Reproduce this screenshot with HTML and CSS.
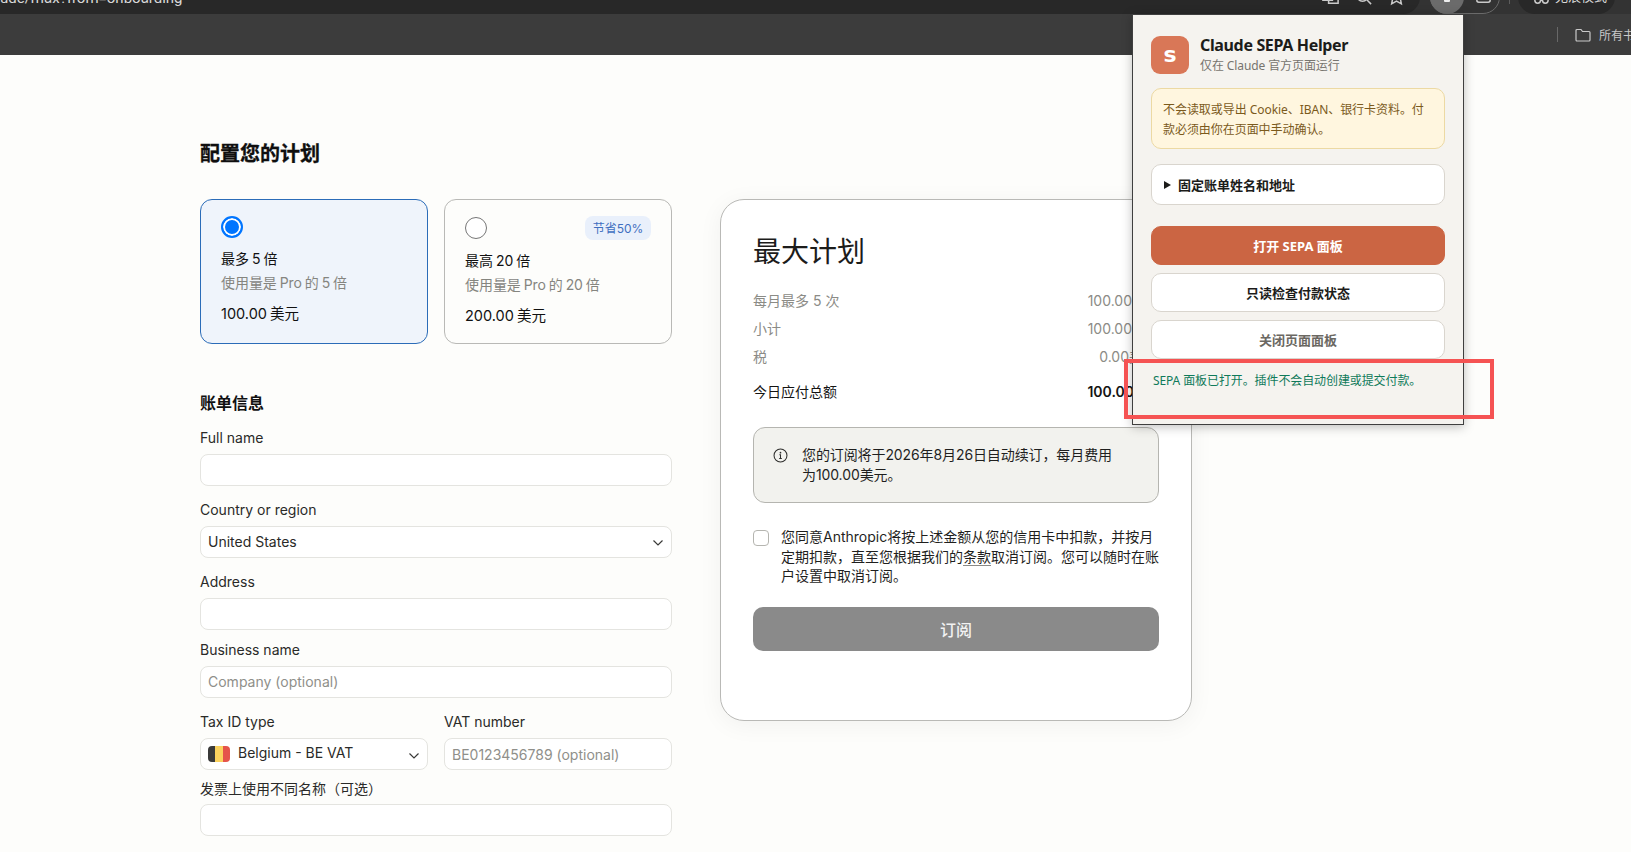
FILE: index.html
```html
<!DOCTYPE html>
<html lang="zh-CN">
<head>
<meta charset="utf-8">
<title>配置您的计划</title>
<link rel="stylesheet" href="styles.css">
</head>
<body>
<header class="chrome">
  <div class="toolbar">
    <div class="omnibox">
      <span class="url">ude/max?from=onboarding</span>
      <div class="omni-icons">
        <svg class="tb-icon" viewBox="0 0 20 20"><path d="M2 4h10v10H2zM8 7h10v10H8z"/></svg>
        <svg class="tb-icon" viewBox="0 0 20 20"><circle cx="9" cy="9" r="6"/><path d="M13.5 13.5L18 18"/></svg>
        <svg class="tb-icon" viewBox="0 0 20 20"><path d="M10 2l2.5 5.3 5.7.7-4.2 4 1.1 5.700-5.100-2.800-5.100 2.800 1.100-5.700-4.200-4 5.700-.7z"/></svg>
      </div>
    </div>
    <div class="ext-group">
      <span class="ext-active"><span class="ext-dot"></span></span>
      <svg class="tb-icon" viewBox="0 0 20 20"><rect x="3" y="3" width="14" height="14" rx="2"/></svg>
    </div>
    <span class="tb-sep"></span>
    <div class="incognito">
      <svg class="tb-icon" viewBox="0 0 20 20"><circle cx="6" cy="14" r="3"/><circle cx="14" cy="14" r="3"/><path d="M9 14h2"/></svg>
      <span class="incognito-text">无痕模式</span>
    </div>
  </div>
  <div class="bookmarks">
    <span class="bm-sep"></span>
    <svg class="folder" viewBox="0 0 16 14"><path d="M1 2.500A1 1 0 0 1 2 1.500h4l1.500 2H14a1 1 0 0 1 1 1V12a1 1 0 0 1-1 1H2a1 1 0 0 1-1-1z"/></svg>
    <span class="bm-text">所有书签</span>
  </div>
</header>

<main class="page">
  <h1 class="page-title">配置您的计划</h1>
  <div class="columns">
    <section class="left">
      <div class="plans">
        <div class="plan plan-on">
          <div class="plan-top"><span class="radio radio-on"></span></div>
          <div class="plan-name">最多 5 倍</div>
          <div class="plan-sub">使用量是 Pro 的 5 倍</div>
          <div class="plan-price">100.00 美元</div>
        </div>
        <div class="plan plan-off">
          <div class="plan-top"><span class="radio"></span><span class="badge">节省50%</span></div>
          <div class="plan-name">最高 20 倍</div>
          <div class="plan-sub">使用量是 Pro 的 20 倍</div>
          <div class="plan-price">200.00 美元</div>
        </div>
      </div>

      <h2 class="billing-title">账单信息</h2>
      <div class="field field-first">
        <label class="label">Full name</label>
        <div class="input"></div>
      </div>
      <div class="field">
        <label class="label">Country or region</label>
        <div class="input select"><span class="select-value">United States</span>
          <svg class="chev" viewBox="0 0 12 8"><path d="M1.500 1.500L6 6l4.500-4.500"/></svg>
        </div>
      </div>
      <div class="field">
        <label class="label">Address</label>
        <div class="input"></div>
      </div>
      <div class="field field-business">
        <label class="label">Business name</label>
        <div class="input placeholder">Company (optional)</div>
      </div>
      <div class="field-row">
        <div class="field-cell">
          <label class="label">Tax ID type</label>
          <div class="input select">
            <span class="flag"><i class="flag-k"></i><i class="flag-y"></i><i class="flag-r"></i></span>
            <span class="select-text">Belgium - BE VAT</span>
            <svg class="chev" viewBox="0 0 12 8"><path d="M1.500 1.500L6 6l4.500-4.500"/></svg>
          </div>
        </div>
        <div class="field-cell">
          <label class="label">VAT number</label>
          <div class="input placeholder">BE0123456789 (optional)</div>
        </div>
      </div>
      <div class="field field-last">
        <label class="label">发票上使用不同名称（可选）</label>
        <div class="input"></div>
      </div>
    </section>

    <section class="summary">
      <h2 class="summary-title">最大计划</h2>
      <div class="rows">
        <div class="row"><span>每月最多 5 次</span><span>100.00美元</span></div>
        <div class="row"><span>小计</span><span>100.00美元</span></div>
        <div class="row row-tax"><span>税</span><span>0.00美元</span></div>
        <div class="row row-total"><span>今日应付总额</span><span class="total-num">100.00美元</span></div>
      </div>
      <div class="notice">
        <svg class="info" viewBox="0 0 16 16"><circle cx="8" cy="8" r="6.900"/><path d="M6.800 7.300H8v4M6.600 11.300h2.800"/><circle class="info-dot" cx="8" cy="5" r="0.900"/></svg>
        <p>您的订阅将于2026年8月26日自动续订，每月费用为100.00美元。</p>
      </div>
      <div class="agree">
        <span class="check"></span>
        <p>您同意Anthropic将按上述金额从您的信用卡中扣款，并按月定期扣款，直至您根据我们的<a class="terms">条款</a>取消订阅。您可以随时在账户设置中取消订阅。</p>
      </div>
      <button class="subscribe">订阅</button>
    </section>
  </div>
</main>

<aside class="popup">
  <div class="pop-head">
    <div class="pop-logo">S</div>
    <div>
      <div class="pop-title">Claude SEPA Helper</div>
      <div class="pop-sub">仅在 Claude 官方页面运行</div>
    </div>
  </div>
  <div class="pop-warn">不会读取或导出 Cookie、IBAN、银行卡资料。付款必须由你在页面中手动确认。</div>
  <div class="pop-details"><span class="tri"></span>固定账单姓名和地址</div>
  <button class="pop-btn pop-primary">打开 SEPA 面板</button>
  <button class="pop-btn">只读检查付款状态</button>
  <button class="pop-btn pop-muted">关闭页面面板</button>
  <div class="pop-status">SEPA 面板已打开。插件不会自动创建或提交付款。</div>
</aside>
<div class="highlight"></div>
</body>
</html>
```
FILE: styles.css
```css
* { box-sizing: border-box; }
html, body { margin: 0; height: 100%; overflow: hidden; }
body {
  background: #fdfdfb;
  color: #141413;
  font-family: Inter, "Noto Sans CJK SC", sans-serif;
  font-size: 14px;
}
.chrome { height: 55px; background: #3c3c3c; color: #d0d0d0; }
.toolbar {
  height: 14px;
  overflow: hidden;
  background: #333;
  display: flex;
  align-items: flex-end;
}
.omnibox {
  width: 1420px;
  height: 34px;
  flex: none;
  background: #282828;
  border-radius: 0 17px 17px 0;
  display: flex;
  align-items: flex-end;
  justify-content: space-between;
  padding-right: 14px;
}
.url {
  font: 15px/20px Roboto, sans-serif;
  color: #d8d8d8;
  margin-bottom: 6px;
  white-space: nowrap;
}
.omni-icons { display: flex; gap: 14px; margin-bottom: 8px; }
.tb-icon { width: 19px; height: 19px; fill: none; stroke: #c9c9c9; stroke-width: 1.600; flex: none; }
.ext-group {
  margin-left: 10px;
  width: 70px;
  height: 34px;
  flex: none;
  border: 1px solid #6a6a6a;
  border-radius: 17px;
  display: flex;
  align-items: flex-end;
  gap: 10px;
}
.ext-active {
  width: 34px;
  height: 34px;
  margin: -1px 0 -1px -1px;
  border-radius: 50%;
  background: #6b6b6b;
  display: flex;
  justify-content: center;
  align-items: flex-end;
  padding-bottom: 12px;
  flex: none;
}
.ext-dot { width: 6px; height: 4px; background: #eee; border-radius: 1px; }
.ext-group .tb-icon { margin-bottom: 8px; }
.tb-sep { width: 1px; height: 20px; background: #5c5c5c; margin: 0 8px 10px 9px; flex: none; }
.incognito {
  width: 97px;
  height: 34px;
  flex: none;
  background: #282828;
  border-radius: 17px;
  display: flex;
  align-items: flex-end;
  gap: 4px;
  padding: 0 0 8px 14px;
}
.incognito-text { font-size: 13px; line-height: 20px; color: #d8d8d8; }
.bookmarks {
  height: 41px;
  display: flex;
  align-items: center;
  justify-content: flex-end;
  overflow: hidden;
}
.bm-sep { width: 1px; height: 15px; background: #686868; margin-right: 17px; flex: none; }
.folder { width: 16px; height: 14px; fill: none; stroke: #c9c9c9; stroke-width: 1.200; flex: none; margin-right: 8px; }
.bm-text { width: 32px; flex: none; white-space: nowrap; font-size: 12px; color: #c8c8c8; }

.page { padding: 87px 0 0 200px; }
.page-title {
  margin: 0 0 33px;
  font-size: 20px;
  line-height: 24px;
  font-weight: 700;
  color: #0f0f0f;
  -webkit-text-stroke: 0.3px #0f0f0f;
}
.columns { display: flex; gap: 48px; align-items: flex-start; }
.left { width: 472px; flex: none; }
.plans { display: flex; gap: 16px; }
.plan {
  flex: 1;
  height: 144.500px;
  border-radius: 12px;
  padding: 17px 20px 0;
}
.plan-on { background: #eff4fb; border: 1px solid #2b6cb8; padding-top: 16px; }
.plan-off { background: #fdfdfb; border: 1px solid #b9b9b6; }
.plan-top { display: flex; justify-content: space-between; height: 22px; align-items: center; }
.radio {
  width: 22px;
  height: 22px;
  border-radius: 50%;
  border: 1px solid #767676;
  background: #fff;
  flex: none;
}
.radio-on { border: 2px solid #0075ff; box-shadow: inset 0 0 0 2px #fff; background: #0075ff; }
.badge {
  height: 24px;
  width: 66px;
  border-radius: 8px;
  background: #e9f0fb;
  color: #3f6fc0;
  font-size: 12px;
  line-height: 26px;
  text-align: center;
}
.plan-name { margin-top: 10px; font-size: 14px; line-height: 22px; color: #111; word-spacing: -1px; }
.plan-sub { margin-top: 2px; font-size: 14px; line-height: 22px; color: #85857f; word-spacing: -1px; letter-spacing: -0.05px; }
.plan-price { margin-top: 9px; font-size: 14.500px; line-height: 22px; color: #111; word-spacing: -1px; }
.plan-off .plan-name { margin-top: 11px; }

.billing-title { margin: 48px 0 0; font-size: 16px; line-height: 22px; font-weight: 700; color: #111; }
.label { display: block; font-size: 14px; line-height: 20px; color: #2a2a28; margin-bottom: 6px; }
.input {
  display: flex;
  align-items: center;
  height: 32px;
  padding: 0 7px;
  background: #fff;
  border: 1px solid #e4e4e0;
  border-radius: 8px;
  font-size: 14px;
  color: #2a2a28;
}
.placeholder { color: #8f8f8a; }
.select { justify-content: space-between; }
.select-value { margin-top: -1px; }
.select-text { flex: 1; margin: -3px 0 0 8px; }
.chev { width: 12px; height: 8px; fill: none; stroke: #3a3a38; stroke-width: 1.200; margin: 3px 0 0; flex: none; }
.field { margin-top: 14px; }
.field-first { margin-top: 14px; }
.field-business { margin-top: 10px; }
.field-last { margin-top: 9px; }
.field-last .label { margin-bottom: 5px; }
.field-row { display: flex; gap: 16px; margin-top: 14.500px; }
.field-cell { flex: 1; }
.flag {
  display: flex;
  width: 22px;
  height: 16px;
  border-radius: 4px;
  overflow: hidden;
  flex: none;
}
.flag i { flex: 1; }
.flag-k { background: #3a3a3a; }
.flag-y { background: #fbd25e; }
.flag-r { background: #e5544b; }

.summary {
  width: 472px;
  height: 522px;
  flex: none;
  background: #fff;
  border: 1px solid #b9b9b6;
  border-radius: 24px;
  box-shadow: 0 4px 24px rgba(0, 0, 0, 0.05);
  padding: 30px 32px 0;
}
.summary-title { margin: 0; font-size: 28px; line-height: 44px; font-weight: 400; color: #1c1c1b; }
.rows { margin-top: 12px; }
.row { display: flex; justify-content: space-between; height: 28px; align-items: center; color: #8b8b86; font-size: 14px; margin-right: -1px; }
.row-tax { margin-right: 2px; }
.row-total { margin-top: 7px; color: #141413; margin-right: -3px; }
.total-num { font-weight: 600; }
.notice {
  display: flex;
  gap: 14px;
  margin-top: 22px;
  height: 76px;
  padding: 17px 40px 0 19px;
  background: #f2f2ee;
  border: 1px solid #b5b5b0;
  border-radius: 12px;
}
.info { width: 15px; height: 15px; flex: none; margin-top: 3px; fill: none; stroke: #2d2d2b; stroke-width: 1.100; }
.info-dot { fill: #2d2d2b; stroke: none; }
.notice p { margin: 0; font-size: 14px; line-height: 20px; color: #1f1f1e; letter-spacing: -0.1px; }
.agree { display: flex; gap: 12px; margin-top: 24px; }
.check { width: 16px; height: 16px; flex: none; margin-top: 3px; background: #fff; border: 1px solid #b5b5b0; border-radius: 4px; }
.agree p { margin: 0 -10px 0 0; width: 380px; font-size: 14px; line-height: 19.500px; color: #1f1f1e; }
.terms { border-bottom: 1px solid #8a8a86; }
.subscribe {
  display: block;
  width: 100%;
  height: 44px;
  margin-top: 21px;
  border: 0;
  border-radius: 10px;
  background: #8a8a8a;
  color: #f2f2f2;
  font: 500 16px "Noto Sans CJK SC", sans-serif;
}

.popup {
  position: absolute;
  left: 1132px;
  top: 14px;
  width: 332px;
  height: 410.500px;
  background: #f5f3ef;
  border: 1px solid #3f3f3f;
  box-shadow: 0 2px 10px rgba(0, 0, 0, 0.25);
  padding: 19px 18px 0;
  font-family: "Noto Sans", "Noto Sans CJK SC", sans-serif;
}
.pop-head { display: flex; gap: 11px; align-items: center; }
.pop-logo {
  width: 38px;
  height: 38px;
  border-radius: 9px;
  background: #d97757;
  color: #fff;
  font: 700 22px/38px "DejaVu Sans", sans-serif;
  text-align: center;
  text-transform: lowercase;
  flex: none;
}
.pop-title { font-size: 16px; line-height: 22px; font-weight: 700; color: #1c1c1a; letter-spacing: -0.35px; }
.pop-sub { font-size: 12px; line-height: 18px; color: #77746e; margin-top: 1px; letter-spacing: -0.1px; }
.pop-warn {
  margin-top: 13px;
  height: 60.500px;
  padding: 11px 11px 0;
  background: #fff6df;
  border: 1px solid #ecd9a3;
  border-radius: 10px;
  font-size: 12px;
  line-height: 19.500px;
  letter-spacing: -0.05px;
  color: #7b5a1c;
}
.pop-details {
  display: flex;
  align-items: center;
  margin-top: 15.500px;
  height: 41px;
  padding-left: 12px;
  background: #fff;
  border: 1px solid #d9d5ce;
  border-radius: 10px;
  font-size: 13px;
  font-weight: 700;
  color: #1c1c1a;
}
.tri {
  width: 0;
  height: 0;
  margin-right: 7px;
  border-left: 7px solid #1c1c1a;
  border-top: 4px solid transparent;
  border-bottom: 4px solid transparent;
}
.pop-btn {
  display: block;
  width: 100%;
  height: 38.500px;
  margin-top: 8.500px;
  background: #fff;
  border: 1px solid #d9d5ce;
  border-radius: 10px;
  font: 700 13px "Noto Sans", "Noto Sans CJK SC", sans-serif;
  color: #1c1c1a;
}
.pop-primary { margin-top: 21px; background: #cb6543; border-color: #cb6543; color: #fff; }
.pop-muted { color: #6b6862; }
.pop-status { margin: 13px 0 0 2px; font-size: 12px; line-height: 18px; letter-spacing: -0.1px; color: #0f7a5a; }
.highlight {
  position: absolute;
  left: 1124px;
  top: 359px;
  width: 370px;
  height: 60px;
  border: 4px solid #f55353;
}
```
